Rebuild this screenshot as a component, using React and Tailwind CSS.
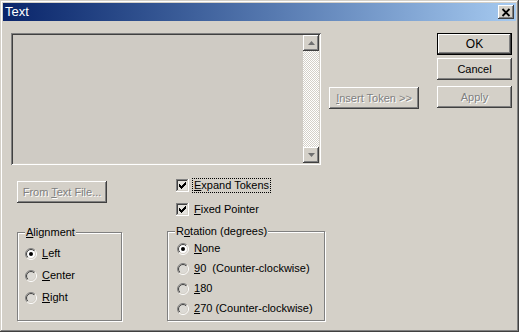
import React from "react";

const raised =
  "bg-[#d4d0c8] shadow-[inset_-1px_-1px_#404040,inset_1px_1px_#fff,inset_-2px_-2px_#808080,inset_2px_2px_#d4d0c8]";
const disabledText = "text-[#808080] [text-shadow:1px_1px_0_#fff]";

function Btn({ className = "", children, disabled, isDefault }) {
  return (
    <div
      className={
        "flex items-center justify-center " +
        (isDefault ? "border border-black " : "") +
        (disabled ? disabledText + " " : "") +
        className
      }
    >
      <div className={"w-full h-full flex items-center justify-center " + raised}>{children}</div>
    </div>
  );
}

function Radio({ checked, fill }) {
  return (
    <svg width="12" height="12" viewBox="0 0 12 12" className="shrink-0">
      <defs>
        <linearGradient id="rdo" x1="0" y1="0" x2="1" y2="1">
          <stop offset="0.5" stopColor="#808080" />
          <stop offset="0.5" stopColor="#ffffff" />
        </linearGradient>
        <linearGradient id="rdi" x1="0" y1="0" x2="1" y2="1">
          <stop offset="0.5" stopColor="#404040" />
          <stop offset="0.5" stopColor="#d4d0c8" />
        </linearGradient>
      </defs>
      <circle cx="6" cy="6" r="5.5" fill="none" stroke="url(#rdo)" />
      <circle cx="6" cy="6" r="4.5" fill={fill} stroke="url(#rdi)" />
      {checked && <circle cx="6" cy="6" r="2" fill="#000" />}
    </svg>
  );
}

function Check() {
  const cols = [
    [3, 5],
    [4, 6],
    [5, 7],
    [6, 6],
    [7, 5],
    [8, 4],
    [9, 3],
  ];
  return (
    <svg width="13" height="13" viewBox="0 0 13 13" className="shrink-0">
      <rect x="0" y="0" width="13" height="13" fill="#e4e2dd" />
      <rect x="0" y="0" width="12" height="1" fill="#808080" />
      <rect x="0" y="0" width="1" height="12" fill="#808080" />
      <rect x="1" y="1" width="10" height="1" fill="#404040" />
      <rect x="1" y="1" width="1" height="10" fill="#404040" />
      <rect x="0" y="12" width="13" height="1" fill="#fff" />
      <rect x="12" y="0" width="1" height="13" fill="#fff" />
      <rect x="1" y="11" width="11" height="1" fill="#d4d0c8" />
      <rect x="11" y="1" width="1" height="11" fill="#d4d0c8" />
      {cols.map(([x, y]) => (
        <rect key={x} x={x} y={y} width="1" height="3" fill="#000" />
      ))}
    </svg>
  );
}

function RadioRow({ checked, fill, children }) {
  return (
    <div className="flex items-center h-[13px] gap-[5px]">
      <Radio checked={checked} fill={fill} />
      <span className="whitespace-pre">{children}</span>
    </div>
  );
}

const groupBox =
  "border border-[#808080] shadow-[1px_1px_0_#fff,inset_1px_1px_0_#fff]";

export default function App() {
  return (
    <div className="w-[519px] h-[332px] bg-[#d4d0c8] flex flex-col p-[3px] font-['Liberation_Sans',_Arial,_sans-serif] text-[11px] leading-[13px] text-black shadow-[inset_-1px_-1px_#404040,inset_1px_1px_#d4d0c8,inset_-2px_-2px_#808080,inset_2px_2px_#fff] overflow-hidden">
      {/* Title bar */}
      <div className="h-[18px] flex items-center justify-between pl-[2px] pr-[2px] bg-gradient-to-r from-[#0a246a] to-[#a6caf0]">
        <span className="text-white text-[13px] leading-[14px]">Text</span>
        <div className={"w-[16px] h-[14px] flex items-center justify-center " + raised}>
          <svg width="10" height="9" viewBox="0 0 10 9">
            <path d="M1.5 1 L8.5 8 M8.5 1 L1.5 8" stroke="#000" strokeWidth="1.8" />
          </svg>
        </div>
      </div>

      {/* Body */}
      <div className="flex flex-col pl-[8px] pt-[12px]">
        {/* Top row */}
        <div className="flex">
          <div className="w-[310px] h-[132px] p-[2px] flex shadow-[inset_1px_1px_#808080,inset_-1px_-1px_#fff,inset_2px_2px_#404040,inset_-2px_-2px_#d4d0c8] bg-[#cfcbc4]">
            <div className="flex-1" />
            <div className="w-[16px] flex flex-col bg-[repeating-conic-gradient(#fff_0%_25%,#d4d0c8_0%_50%)] bg-[length:2px_2px]">
              <div className={"h-[16px] flex items-center justify-center " + raised}>
                <svg width="7" height="4" viewBox="0 0 7 4">
                  <path d="M3.5 0 L7 4 L0 4 Z" fill="#707070" />
                </svg>
              </div>
              <div className="flex-1" />
              <div className={"h-[16px] flex items-center justify-center " + raised}>
                <svg width="7" height="4" viewBox="0 0 7 4">
                  <path d="M0 0 L7 0 L3.5 4 Z" fill="#707070" />
                </svg>
              </div>
            </div>
          </div>
          <Btn disabled className="ml-[8px] mt-[54px] w-[90px] h-[22px]">
            <span>
              <u>I</u>nsert Token &gt;&gt;
            </span>
          </Btn>
          <div className="ml-[18px] w-[75px] flex flex-col">
            <Btn isDefault className="h-[22px] text-[12px]">
              OK
            </Btn>
            <Btn className="mt-[3px] h-[22px]">Cancel</Btn>
            <Btn disabled className="mt-[6px] h-[22px]">
              Apply
            </Btn>
          </div>
        </div>

        {/* Bottom row */}
        <div className="flex pl-[6px]">
          <div className="w-[150px] flex flex-col items-start">
            <Btn disabled className="mt-[16px] w-[90px] h-[22px]">
              <span>
                From <u>T</u>ext File...
              </span>
            </Btn>
            <fieldset className={"mt-[23px] w-[105px] h-[95px] " + groupBox}>
              <legend className="ml-[7px] px-[1px] bg-[#d4d0c8] leading-[13px]">
                <u>A</u>lignment
              </legend>
              <div className="flex flex-col gap-[9px] pt-[8px] pl-[7px]">
                <RadioRow checked fill="#fff">
                  <u>L</u>eft
                </RadioRow>
                <RadioRow fill="#dcdad5">
                  <u>C</u>enter
                </RadioRow>
                <RadioRow fill="#dcdad5">
                  <u>R</u>ight
                </RadioRow>
              </div>
            </fieldset>
          </div>
          <div className="flex flex-col">
            <div className="mt-[14px] pl-[9px] flex items-center gap-[4px] h-[13px]">
              <Check />
              <span className="outline outline-1 outline-dotted outline-black px-[1px]">
                <u>E</u>xpand Tokens
              </span>
            </div>
            <div className="mt-[11px] pl-[9px] flex items-center gap-[5px] h-[13px]">
              <Check />
              <span>
                <u>F</u>ixed Pointer
              </span>
            </div>
            <fieldset className={"mt-[9px] w-[158px] h-[96px] " + groupBox}>
              <legend className="ml-[7px] px-[1px] bg-[#d4d0c8] leading-[13px]">
                R<u>o</u>tation (degrees)
              </legend>
              <div className="flex flex-col gap-[7px] pt-[4px] pl-[9px]">
                <RadioRow checked fill="#fff">
                  <u>N</u>one
                </RadioRow>
                <RadioRow fill="#dcdad5">
                  <u>9</u>0  (Counter-clockwise)
                </RadioRow>
                <RadioRow fill="#dcdad5">
                  <u>1</u>80
                </RadioRow>
                <RadioRow fill="#dcdad5">
                  <u>2</u>70 (Counter-clockwise)
                </RadioRow>
              </div>
            </fieldset>
          </div>
        </div>
      </div>
    </div>
  );
}
